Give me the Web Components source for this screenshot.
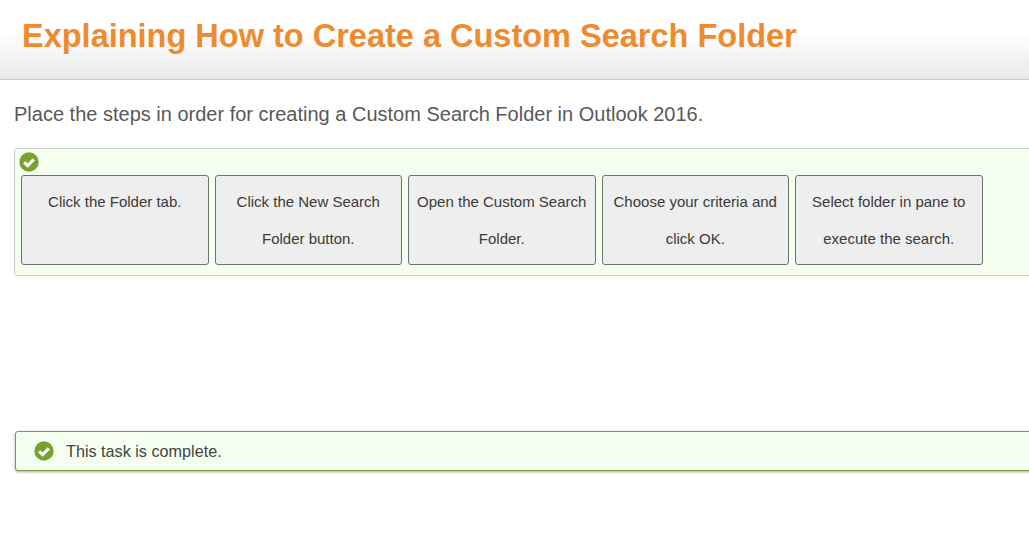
<!DOCTYPE html>
<html>
<head>
<meta charset="utf-8">
<title>Explaining How to Create a Custom Search Folder</title>
<style>
  html, body { margin: 0; padding: 0; background: #fff; overflow: hidden; height: 100%; }
  body { font-family: "Liberation Sans", Arial, sans-serif; }
</style>
</head>
<body>
<task-page>
  <page-header slot="header">Explaining How to Create a Custom Search Folder</page-header>
  <span slot="prompt">Place the steps in order for creating a Custom Search Folder in Outlook 2016.</span>
  <step-list slot="steps">
    <step-tile>Click the Folder tab.</step-tile>
    <step-tile>Click the New Search Folder button.</step-tile>
    <step-tile>Open the Custom Search Folder.</step-tile>
    <step-tile>Choose your criteria and click OK.</step-tile>
    <step-tile>Select folder in pane to execute the search.</step-tile>
  </step-list>
  <task-notice slot="notice">This task is complete.</task-notice>
</task-page>

<script>
const CHECK_ICON = `
  <svg viewBox="0 0 20 20" width="20" height="20" aria-hidden="true">
    <circle cx="10" cy="10" r="9.7" fill="#78a22f"/>
    <path d="M5.2 10.3 L8.7 13.6 L14.8 7.3" fill="none" stroke="#fff" stroke-width="3.1"/>
  </svg>`;

class PageHeader extends HTMLElement {
  constructor () {
    super();
    this.attachShadow({mode: 'open'}).innerHTML = `
      <style>
        :host {
          display: block;
          box-sizing: border-box;
          height: 80px;
          padding: 16px 0 0 22px;
          background: linear-gradient(#fff 0, #fff 40%, #e9e9e9 100%);
          border-bottom: 1px solid #c8c8c8;
        }
        h1 {
          margin: 0;
          font: bold 32.5px/41px "Liberation Sans", Arial, sans-serif;
          color: #ef8b2f;
          white-space: nowrap;
        }
      </style>
      <h1><slot></slot></h1>`;
  }
}

class TaskPage extends HTMLElement {
  constructor () {
    super();
    this.attachShadow({mode: 'open'}).innerHTML = `
      <style>
        :host { display: block; width: 1029px; height: 540px; overflow: hidden; }
        .prompt {
          margin: 0;
          padding: 22px 0 0 14px;
          font-size: 20px;
          line-height: 25px;
          color: #595959;
          white-space: nowrap;
        }
        .steps { padding: 21px 0 0 14px; }
        .notice { padding: 155px 0 0 15px; }
      </style>
      <slot name="header"></slot>
      <p class="prompt"><slot name="prompt"></slot></p>
      <div class="steps"><slot name="steps"></slot></div>
      <div class="notice"><slot name="notice"></slot></div>`;
  }
}

class StepList extends HTMLElement {
  constructor () {
    super();
    this.attachShadow({mode: 'open'}).innerHTML = `
      <style>
        :host {
          display: block;
          box-sizing: border-box;
          width: 1040px;
          height: 128px;
          background: #f5fff0;
          border: 1px solid #c6cec2;
          border-radius: 3px;
          padding: 3px 6px 0 4px;
        }
        .tick { display: block; height: 23px; }
        .row { display: flex; gap: 6px; padding-left: 2px; }
      </style>
      <span class="tick">${CHECK_ICON}</span>
      <div class="row"><slot></slot></div>`;
  }
}

class StepTile extends HTMLElement {
  constructor () {
    super();
    this.attachShadow({mode: 'open'}).innerHTML = `
      <style>
        :host {
          display: block;
          box-sizing: border-box;
          flex: 0 0 187.5px;
          height: 90px;
          padding: 7px 8px 0;
          background: #eee;
          border: 1px solid #707070;
          border-radius: 3px;
          font-size: 15px;
          line-height: 37px;
          color: #3a3a3a;
          text-align: center;
        }
      </style>
      <slot></slot>`;
  }
}

class TaskNotice extends HTMLElement {
  constructor () {
    super();
    this.attachShadow({mode: 'open'}).innerHTML = `
      <style>
        :host {
          display: flex;
          align-items: center;
          gap: 12px;
          box-sizing: border-box;
          width: 1040px;
          height: 40px;
          padding-left: 18px;
          background: #f5fff0;
          border: 1px solid #7a9f3f;
          border-radius: 3px;
          box-shadow: 0 1px 3px rgba(0, 0, 0, .35);
          font-size: 16.2px;
          color: #444;
        }
        svg { display: block; }
      </style>
      ${CHECK_ICON}
      <span><slot></slot></span>`;
  }
}

customElements.define('page-header', PageHeader);
customElements.define('task-page', TaskPage);
customElements.define('step-list', StepList);
customElements.define('step-tile', StepTile);
customElements.define('task-notice', TaskNotice);
</script>
</body>
</html>
